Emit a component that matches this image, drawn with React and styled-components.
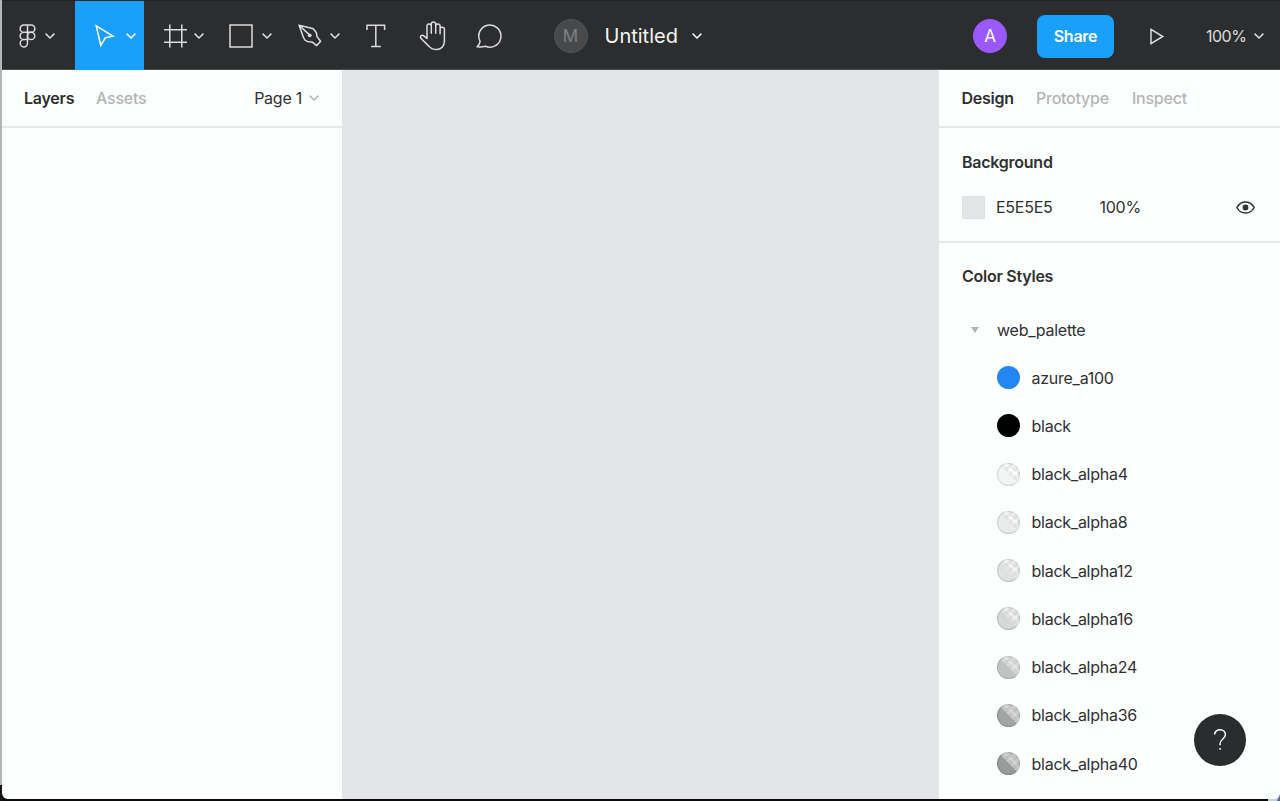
import React from 'react';
import styled, { createGlobalStyle } from 'styled-components';

const GlobalStyle = createGlobalStyle`
  * { box-sizing: border-box; }
  body {
    margin: 0;
    background: #0c0a0c;
    overflow: hidden;
    font-family: Inter, "Liberation Sans", sans-serif;
    font-size: 16px;
    letter-spacing: -0.25px;
    color: #303132;
  }
  svg { display: block; flex: none; overflow: visible; }
`;

const Desktop = styled.div`
  width: 1280px;
  height: 801px;
  padding-left: 2px;
  background: linear-gradient(#b4b5b7 0 785px, #171315 785px);
`;

const Window = styled.div`
  display: flex;
  flex-direction: column;
  height: 799px;
  border-radius: 0 0 0 6px;
  overflow: hidden;
  background: #fdfefe;
  box-shadow: 0 4px 0 #0c0a0c;
`;

const Toolbar = styled.header`
  display: flex;
  align-items: stretch;
  flex: none;
  height: 70px;
  background: #2c2d2f;
  border-top: 1px solid #222325;
  border-bottom: 1px solid #4c4d4e;
  color: #fff;
`;

const Tool = styled.button`
  display: flex;
  align-items: center;
  justify-content: flex-start;
  flex: none;
  gap: ${(p) => p.$gap || 0}px;
  width: ${(p) => p.$width}px;
  height: 69px;
  padding: 0 0 0 ${(p) => p.$inset}px;
  border: 0;
  color: ${(p) => (p.$active ? '#fff' : '#dcdcdd')};
  background: ${(p) => (p.$active ? '#18a0fb' : 'transparent')};
`;

const FileTitle = styled.div`
  display: flex;
  align-items: center;
  margin-left: 36px;
  padding-top: 1px;
  font-size: 20px;
  letter-spacing: 0;
  color: #f5f5f5;
`;

const TitleText = styled.span`
  width: 73px;
  margin: 0 14px 0 17px;
  white-space: nowrap;
`;

const Avatar = styled.span`
  display: flex;
  align-items: center;
  justify-content: center;
  flex: none;
  width: 34px;
  height: 34px;
  border-radius: 50%;
  font-size: 17px;
  letter-spacing: 0;
  border: 1px solid ${(p) => p.$edge};
  background: ${(p) => p.$fill};
  color: ${(p) => p.$ink};
`;

const Actions = styled.div`
  display: flex;
  align-items: center;
  margin-left: auto;
  padding: 2px 16px 0 0;
`;

const ShareButton = styled.button`
  width: 77px;
  height: 43px;
  margin: 0 36px 0 30px;
  padding: 0;
  border: 0;
  border-radius: 8px;
  background: #18a0fb;
  color: #fff;
  font: 600 16px Inter, sans-serif;
  letter-spacing: -0.25px;
`;

const Zoom = styled.div`
  display: flex;
  align-items: center;
  justify-content: space-between;
  width: 58px;
  margin-left: 42px;
  letter-spacing: -0.5px;
  color: #dcdcdd;
`;

const Workspace = styled.div`
  display: flex;
  flex: 1;
  min-height: 0;
`;

const LeftPanel = styled.aside`
  flex: none;
  width: 341px;
  border-right: 1px solid #e3e4e6;
`;

const Canvas = styled.main`
  flex: 1;
  background: #e4e5e7;
`;

const RightPanel = styled.aside`
  flex: none;
  width: 341px;
`;

const PanelHeader = styled.div`
  display: flex;
  align-items: center;
  gap: 22px;
  height: 58px;
  padding: 0 23px 1px ${(p) => p.$inset}px;
  border-bottom: 2px solid #e7e8e9;
`;

const Tab = styled.span`
  width: ${(p) => p.$width}px;
  white-space: nowrap;
  font-weight: ${(p) => (p.$active ? 600 : 500)};
  color: ${(p) => (p.$active ? '#2d2e2f' : '#b3b5b6')};
`;

const PagePicker = styled.span`
  display: flex;
  align-items: center;
  gap: 7px;
  margin-left: auto;
  color: #303132;
`;

const BackgroundSection = styled.section`
  height: 115px;
  padding: 24px 25px 0 23px;
  border-bottom: 2px solid #e7e8e9;
`;

const SectionTitle = styled.h2`
  margin: 0;
  font-size: 16px;
  line-height: 20px;
  font-weight: 600;
`;

const FillRow = styled.div`
  display: flex;
  align-items: center;
  height: 24px;
  margin-top: 23px;
`;

const FillSwatch = styled.span`
  width: 23px;
  height: 23px;
  margin-right: 11px;
  background: #e4e5e7;
  border: 1px solid #dfe0e2;
`;

const FillValue = styled.span`
  width: ${(p) => p.$width}px;
`;

const StylesSection = styled.section`
  padding: 23px 0 0 23px;
`;

const GroupRow = styled.div`
  display: flex;
  align-items: center;
  gap: 17.5px;
  height: 48px;
  margin-top: 19.5px;
  padding-left: 7.5px;
`;

const StyleRow = styled.div`
  display: flex;
  align-items: center;
  gap: 11.5px;
  height: 48.25px;
  padding-left: 35px;
`;

const Swatch = styled.span`
  width: 23px;
  height: 23px;
  border-radius: 50%;
  border: 1px solid rgba(0, 0, 0, ${(p) => (p.$alpha === undefined ? 0 : 0.12)});
  background: ${(p) =>
    p.$alpha === undefined
      ? p.$color
      : `linear-gradient(45deg, ${p.$color} 50%, transparent 50.5%),
         linear-gradient(rgba(0,0,0,${p.$alpha}), rgba(0,0,0,${p.$alpha})),
         repeating-conic-gradient(#fff 0 25%, #e6e7e7 0 50%) 3px 0 / 8.6px 8.6px`};
  background-origin: border-box;
`;

const HelpButton = styled.button`
  position: fixed;
  right: 34px;
  bottom: 35px;
  display: flex;
  align-items: center;
  justify-content: center;
  width: 52px;
  height: 52px;
  padding: 0;
  border: 0;
  border-radius: 50%;
  background: #2b2c2e;
`;

const WindowCorner = styled.svg`
  position: fixed;
  right: 0;
  bottom: 0;
`;

const stroke = { fill: 'none', stroke: 'currentColor', strokeWidth: 1.5 };

const Chevron = ({ color }) => (
  <svg width="10" height="6" viewBox="0 0 10 6" color={color} {...stroke}>
    <path d="M.6.6 5 5 9.4.6" />
  </svg>
);

const LogoIcon = () => (
  <svg width="17" height="24" viewBox="0 0 17 24" {...stroke}>
    <path d="M8.5 1H4.8a3.6 3.6 0 0 0 0 7.3h3.7zM8.5 1h3.7a3.6 3.6 0 0 1 0 7.3H8.5zM8.5 8.3H4.8a3.6 3.6 0 0 0 0 7.3h3.7zM8.5 15.6H4.8a3.65 3.65 0 1 0 3.7 3.7z" />
    <circle cx="12.1" cy="11.95" r="3.65" />
  </svg>
);

const MoveIcon = () => (
  <svg width="19" height="24" viewBox="0 0 19 24" {...stroke}>
    <path d="M1.2 1.8 18 12.2l-7.6 1.5-4.6 7.8z" />
  </svg>
);

const FrameIcon = () => (
  <svg width="23" height="24" viewBox="0 0 23 24" {...stroke}>
    <path d="M5.8 0.5v23M17.8 0.5v23M0 5.7h23M0 18.3h23" />
  </svg>
);

const RectangleIcon = () => (
  <svg width="24" height="24" viewBox="0 0 24 24" {...stroke}>
    <path d="M1 1h22v22H1z" />
  </svg>
);

const PenIcon = () => (
  <svg width="24" height="24" viewBox="0 0 24 24" {...stroke} strokeLinejoin="round">
    <path d="M1 1.2 14.6 4.4c2.6 2 4.4 4.7 4.3 8l3.7 4.8-3.9 4.4-4.4-3.5c-2.8.1-5.4-.2-7.1-1.8C4.6 13.4 3.5 6.7 1 1.2ZM1 1.2l10.5 9.7" />
    <circle cx="11.7" cy="11.3" r="1.9" fill="currentColor" stroke="none" />
  </svg>
);

const TextIcon = () => (
  <svg width="20" height="24" viewBox="0 0 20 24" {...stroke}>
    <path d="M1 6V1.2h17.6V6M9.8 1.2v21.4M5 22.6h9.8" />
  </svg>
);

const HandIcon = () => (
  <svg width="27" height="30" viewBox="0 0 27 30" {...stroke} strokeLinecap="round" strokeLinejoin="round">
    <path d="M8 17.5V5.2a2.15 2.15 0 0 1 4.3 0V12.3M12.3 12.3V3.2a2.15 2.15 0 0 1 4.4 0v9.1M16.7 5.2a2.15 2.15 0 0 1 4.4 0v7.6M21.1 8.3a2.15 2.15 0 0 1 4.3 0v11.9c0 5-3.3 8.3-8 8.3-3.5 0-5.7-1-7.6-3.4L1.9 17.3c-1.4-2.6 1.2-4.1 3.2-2.2L8 17.5" />
  </svg>
);

const CommentIcon = () => (
  <svg width="27" height="24" viewBox="0 0 27 24" {...stroke} strokeLinejoin="round">
    <path d="M4.1 17.4A11.1 11.1 0 1 1 9.5 22.3C6.8 22.9 4 23.1 1 22.8c1.8-1.5 2.8-3.2 3.1-5.4Z" />
  </svg>
);

const PlayIcon = () => (
  <svg width="14" height="17" viewBox="0 0 14 17" color="#dcdcdd" {...stroke}>
    <path d="M1 1.3v14.4l11.8-7.2z" />
  </svg>
);

const EyeIcon = () => (
  <svg width="19" height="13" viewBox="0 0 19 13" {...stroke}>
    <path d="M.8 6.5C5 -.9 14 -.9 18.2 6.5 14 13.9 5 13.9.8 6.5Z" />
    <circle cx="9.5" cy="6.5" r="2.9" fill="currentColor" stroke="none" />
  </svg>
);

const QuestionIcon = () => (
  <svg width="14" height="22" viewBox="0 0 14 22" color="#fff" {...stroke}>
    <path d="M1.6 5.6C1.6 2.7 4 .8 7 .8s5.4 2 5.4 4.9c0 4.3-5.3 4.3-5.3 9v1.5" />
    <path d="M7.1 19v1.8" />
  </svg>
);

const tools = [
  { name: 'Menu', Icon: LogoIcon, width: 73, inset: 16.5, gap: 9.5, menu: true },
  { name: 'Move', Icon: MoveIcon, width: 68.5, inset: 20, gap: 11.5, menu: true, active: true },
  { name: 'Frame', Icon: FrameIcon, width: 68, inset: 20, gap: 7.5, menu: true },
  { name: 'Rectangle', Icon: RectangleIcon, width: 68, inset: 17.5, gap: 8.5, menu: true },
  { name: 'Pen', Icon: PenIcon, width: 68, inset: 18, gap: 8.5, menu: true },
  { name: 'Text', Icon: TextIcon, width: 56.5, inset: 18.5 },
  { name: 'Hand', Icon: HandIcon, width: 57, inset: 15 },
  { name: 'Comment', Icon: CommentIcon, width: 56.5, inset: 14.5 },
];

const colorStyles = [
  { name: 'azure_a100', color: '#2386f2' },
  { name: 'black', color: '#000' },
  { name: 'black_alpha4', color: '#f3f4f4', alpha: 0.01 },
  { name: 'black_alpha8', color: '#e9eaea', alpha: 0.03 },
  { name: 'black_alpha12', color: '#e0e1e1', alpha: 0.04 },
  { name: 'black_alpha16', color: '#d6d7d7', alpha: 0.06 },
  { name: 'black_alpha24', color: '#c2c3c3', alpha: 0.1 },
  { name: 'black_alpha36', color: '#a3a4a4', alpha: 0.16 },
  { name: 'black_alpha40', color: '#999a9a', alpha: 0.18 },
];

export default function App() {
  return (
    <Desktop>
      <GlobalStyle />
      <Window>
        <Toolbar>
          {tools.map(({ name, Icon, width, inset, gap, menu, active }) => (
            <Tool key={name} aria-label={name} $width={width} $inset={inset} $gap={gap} $active={active}>
              <Icon />
              {menu && <Chevron />}
            </Tool>
          ))}
          <FileTitle>
            <Avatar $fill="#48494b" $edge="#535456" $ink="#7f8082">M</Avatar>
            <TitleText>Untitled</TitleText>
            <Chevron />
          </FileTitle>
          <Actions>
            <Avatar $fill="#9b59fb" $edge="#9b59fb" $ink="#fff">A</Avatar>
            <ShareButton>Share</ShareButton>
            <PlayIcon />
            <Zoom>
              100%
              <Chevron />
            </Zoom>
          </Actions>
        </Toolbar>
        <Workspace>
          <LeftPanel>
            <PanelHeader $inset={22}>
              <Tab $active $width={50}>Layers</Tab>
              <Tab $width={51}>Assets</Tab>
              <PagePicker>
                Page 1
                <Chevron color="#b3b5b6" />
              </PagePicker>
            </PanelHeader>
          </LeftPanel>
          <Canvas />
          <RightPanel>
            <PanelHeader $inset={22.5}>
              <Tab $active $width={52.5}>Design</Tab>
              <Tab $width={74}>Prototype</Tab>
              <Tab $width={56}>Inspect</Tab>
            </PanelHeader>
            <BackgroundSection>
              <SectionTitle>Background</SectionTitle>
              <FillRow>
                <FillSwatch />
                <FillValue $width={103.5}>E5E5E5</FillValue>
                <FillValue $width={136.5}>100%</FillValue>
                <EyeIcon />
              </FillRow>
            </BackgroundSection>
            <StylesSection>
              <SectionTitle>Color Styles</SectionTitle>
              <GroupRow>
                <svg width="10" height="8" viewBox="0 0 10 8" fill="#b3b5b6">
                  <path d="M1 1h8L5 7z" />
                </svg>
                web_palette
              </GroupRow>
              {colorStyles.map(({ name, color, alpha }) => (
                <StyleRow key={name}>
                  <Swatch $color={color} $alpha={alpha} />
                  {name}
                </StyleRow>
              ))}
            </StylesSection>
          </RightPanel>
        </Workspace>
      </Window>
      <HelpButton aria-label="Help">
        <QuestionIcon />
      </HelpButton>
      <WindowCorner width="12" height="8" viewBox="0 0 12 8">
        <path d="M12 0v8H0V6h5c4 0 6-2 7-6z" fill="#c9ced6" />
        <path d="M12 2v6H9z" fill="#44659c" />
      </WindowCorner>
    </Desktop>
  );
}
